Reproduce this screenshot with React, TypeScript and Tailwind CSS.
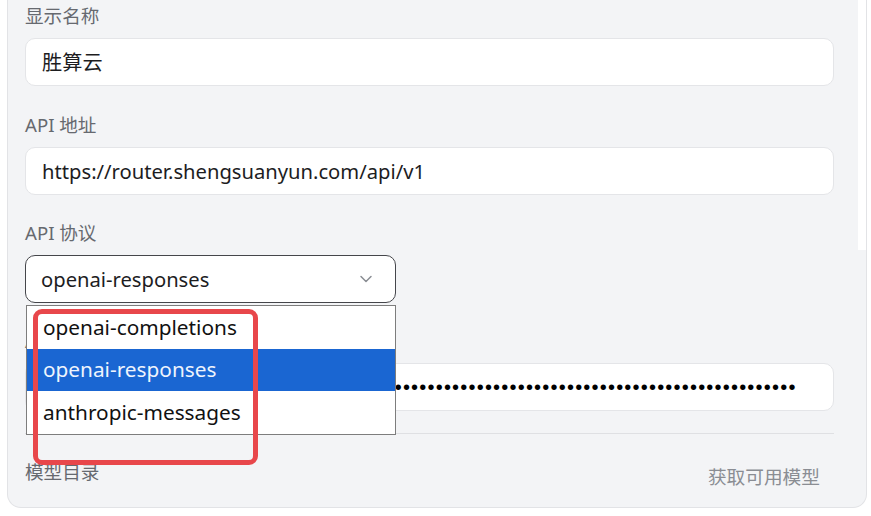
import React from 'react';
import { ChevronDown } from 'lucide-react';

const protocols = ['openai-completions', 'openai-responses', 'anthropic-messages'];

const Label: React.FC<{ children: React.ReactNode; className?: string }> = ({ children, className = '' }) => (
  <div className={`h-[24px] leading-[24px] text-[18.6px] text-[#66696f] ${className}`}>{children}</div>
);

const TextBox: React.FC<{ children: React.ReactNode; className?: string }> = ({ children, className = '' }) => (
  <div
    className={`h-[48px] w-full rounded-[10px] border border-[#e4e5e8] bg-white px-[16px] flex items-center text-[20.2px] text-[#1d1d1f] overflow-hidden whitespace-nowrap ${className}`}
  >
    {children}
  </div>
);

const App: React.FC = () => {
  const selected = 'openai-responses';

  return (
    <div
      className="relative w-[871px] h-[516px] bg-white overflow-hidden"
      style={{ fontFamily: '"Noto Sans", "Noto Sans CJK SC", sans-serif' }}
    >
      {/* provider settings card, scrolled so its header sits above the fold */}
      <div className="relative ml-[7px] w-[860px] h-[508px] bg-[#f3f4f6] border-l border-r border-b border-[#e2e3e6] rounded-b-[14px] pl-[17px] pr-[32px] pt-[4px] flex flex-col">
        <Label>显示名称</Label>
        <TextBox className="mt-[10px]">胜算云</TextBox>

        <Label className="mt-[27px]">API 地址</Label>
        <TextBox className="mt-[10px]">https://router.shengsuanyun.com/api/v1</TextBox>

        <Label className="mt-[26px]">API 协议</Label>
        <div className="relative mt-[10px] w-[371px]">
          <div className="h-[48px] rounded-[10px] border-[1.5px] border-[#45464b] bg-white pl-[15px] pr-[19px] flex items-center justify-between text-[20.2px] text-[#1d1d1f]">
            <span>{selected}</span>
            <ChevronDown size={20} strokeWidth={1.8} className="text-[#8a8d93]" />
          </div>
        </div>

        <Label className="mt-[26px]">API 密钥</Label>
        <TextBox className="mt-[10px]">
          <span
            className="tracking-[1.2px] text-[20px] text-black"
            style={{ fontFamily: '"Liberation Sans", sans-serif' }}
          >
            {'•'.repeat(92)}
          </span>
        </TextBox>

        <div className="mt-[22px] h-px w-full bg-[#dfe0e3]" />

        <div className="mt-[26px] flex items-start justify-between">
          <Label>模型目录</Label>
          <button className="mt-[5px] mr-[14px] h-[24px] leading-[24px] text-[18.7px] text-[#8a8d93]">获取可用模型</button>
        </div>

        {/* scrollbar */}
        <div className="absolute right-0 top-0 w-[8px] h-[250px] bg-white" />
      </div>

      {/* open select list */}
      <div className="absolute left-[26px] top-[305px] w-[370px] border border-[#7d7d7d] bg-white">
        {protocols.map(p => (
          <div
            key={p}
            className={`h-[42.7px] pl-[16px] flex items-center text-[20.8px] ${
              p === selected ? 'bg-[#1a66d2] text-[#eef4fd]' : 'text-[#111]'
            }`}
          >
            {p}
          </div>
        ))}
      </div>

      {/* highlight frame */}
      <div className="absolute left-[33px] top-[309px] w-[225px] h-[156px] rounded-[9px] border-[5px] border-[#e8474b] pointer-events-none" />
    </div>
  );
};

export default App;
